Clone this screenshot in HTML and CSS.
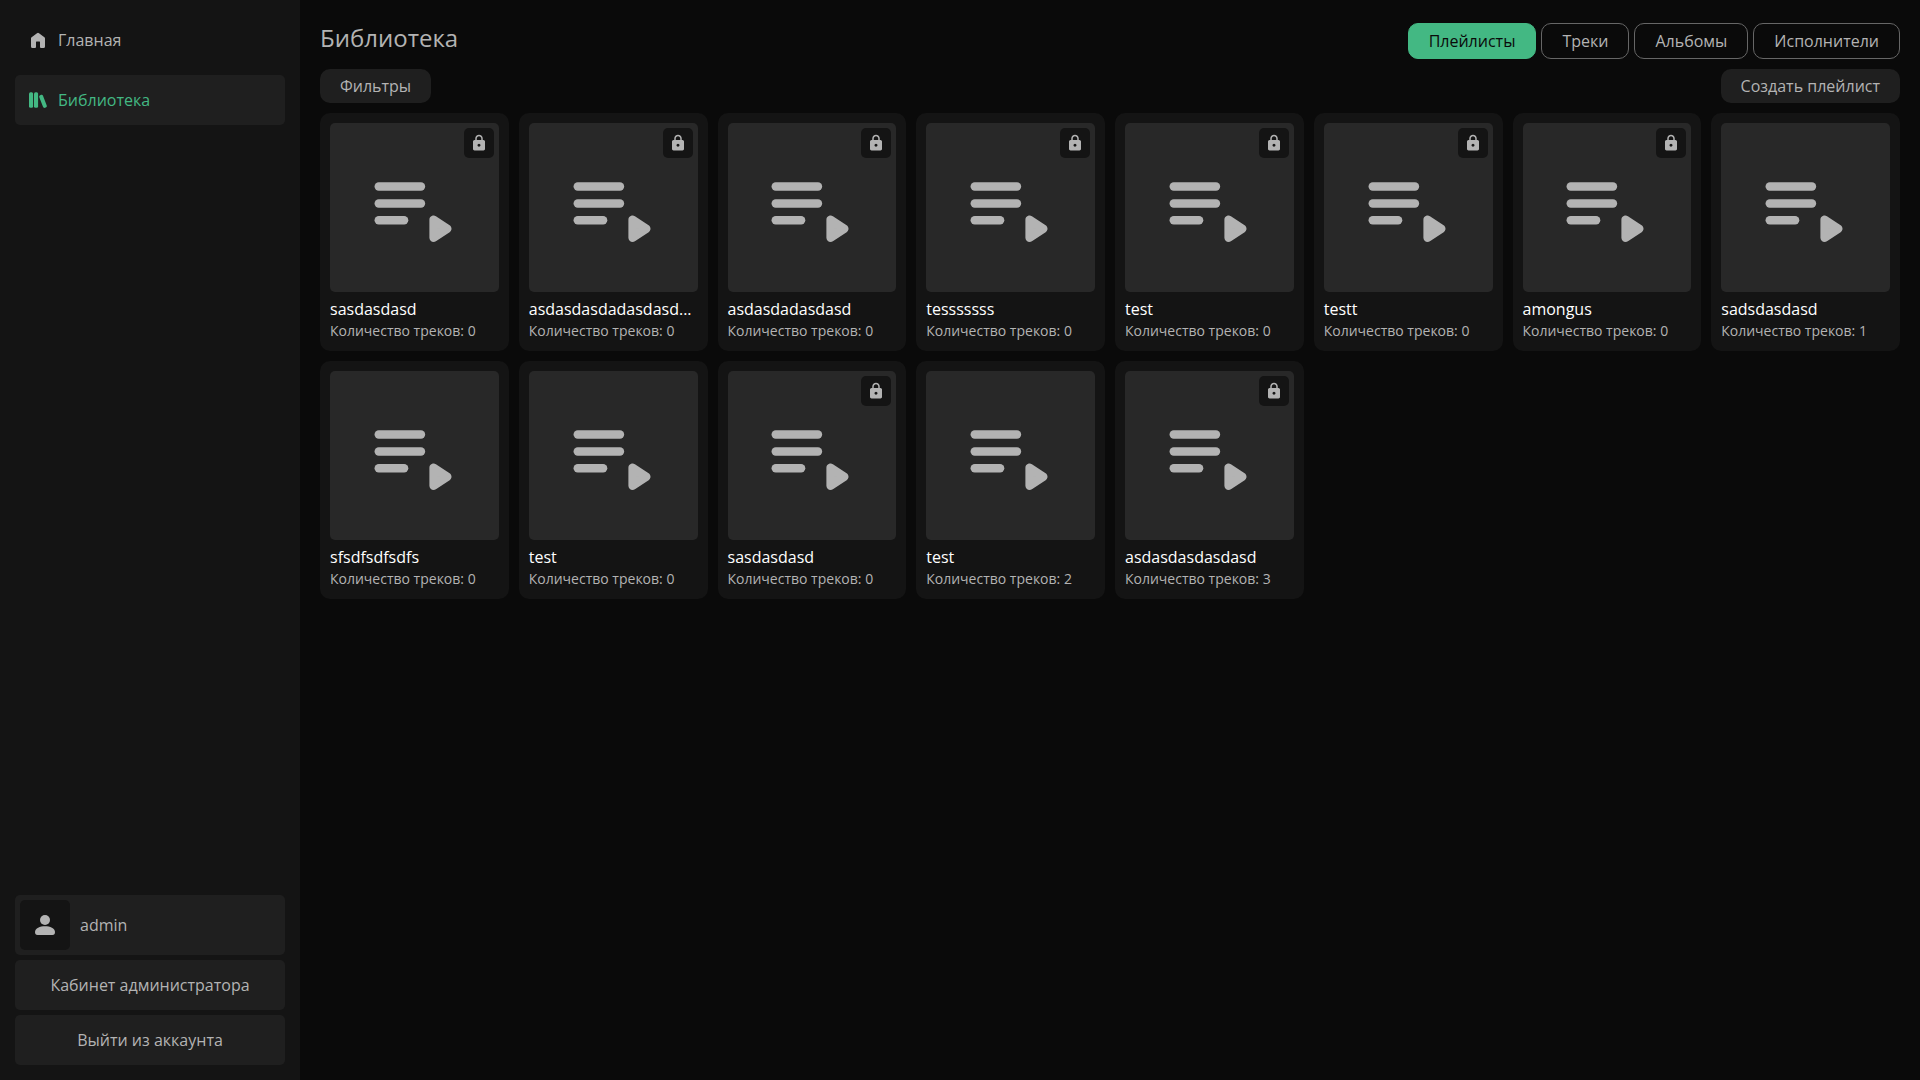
FILE: index.html
```html
<!DOCTYPE html>
<html lang="ru">
<head>
<meta charset="utf-8">
<title>Библиотека</title>
<link rel="stylesheet" href="styles.css">
</head>
<body>
<svg class="sprite" aria-hidden="true">
  <symbol id="i-playlist" viewBox="0 0 24 24"><rect x="2.5" y="6" width="12" height="2" rx="1"/><rect x="2.5" y="10" width="12" height="2" rx="1"/><rect x="2.5" y="14" width="8" height="2" rx="1"/><path d="M16.500 14.850v4.300L19.750 17z" stroke="currentColor" stroke-width="2" stroke-linejoin="round"/></symbol>
  <symbol id="i-lock" viewBox="0 0 24 24"><path d="M6 22q-.825 0-1.412-.587T4 20V10q0-.825.588-1.412T6 8h1V6q0-2.075 1.463-3.537T12 1t3.538 1.463T17 6v2h1q.825 0 1.413.588T20 10v10q0 .825-.587 1.413T18 22zm6-5q.825 0 1.413-.587T14 15t-.587-1.412T12 13t-1.412.588T10 15t.588 1.413T12 17M9 8h6V6q0-1.250-.875-2.125T12 3t-2.125.875T9 6z"/></symbol>
</svg>
<aside class="sidebar">
  <nav class="nav">
    <a class="nav-item"><svg class="nav-icon" viewBox="0 0 20 20"><path d="M9 3.200a1.600 1.600 0 0 1 2 0l5.400 4.100a1.600 1.600 0 0 1 .6 1.300V16.500a1.500 1.500 0 0 1-1.500 1.500H13a1 1 0 0 1-1-1V12a.5.5 0 0 0-.5-.5h-3a.5.5 0 0 0-.5.5v5a1 1 0 0 1-1 1H4.500A1.500 1.500 0 0 1 3 16.500V8.600a1.600 1.600 0 0 1 .6-1.300z"/></svg>Главная</a>
    <a class="nav-item active"><svg class="nav-icon" viewBox="0 0 20 20"><rect x="1" y="2.300" width="4.100" height="15.400" rx="1.500"/><rect x="6" y="2.300" width="4.100" height="15.400" rx="1.500"/><rect x="13" y="4.600" width="4" height="13.400" rx="1.500" transform="rotate(-21 15 11.300)"/></svg>Библиотека</a>
  </nav>
  <div class="account">
    <a class="user"><span class="avatar"><svg viewBox="0 0 20 20"><circle cx="10" cy="5" r="5"/><path d="M10 11.300c5 0 10 2 10 5.700 0 2-.8 3-2.500 3h-15C.8 20 0 19 0 17c0-3.700 5-5.700 10-5.700z"/></svg></span>admin</a>
    <button class="account-btn">Кабинет администратора</button>
    <button class="account-btn">Выйти из аккаунта</button>
  </div>
</aside>
<main class="main">
  <header class="header">
    <h1 class="title">Библиотека</h1>
    <div class="tabs">
      <button class="tab selected">Плейлисты</button>
      <button class="tab">Треки</button>
      <button class="tab">Альбомы</button>
      <button class="tab">Исполнители</button>
    </div>
  </header>
  <div class="toolbar">
    <button class="btn">Фильтры</button>
    <button class="btn">Создать плейлист</button>
  </div>
  <div class="grid" id="grid"></div>
</main>
<script src="app.js"></script>
</body>
</html>
```
FILE: app.js
```js
// name, track count, private
const playlists = [
  ['sasdasdasd', 0, true],
  ['asdasdasdadasdasd...', 0, true],
  ['asdasdadasdasd', 0, true],
  ['tesssssss', 0, true],
  ['test', 0, true],
  ['testt', 0, true],
  ['amongus', 0, true],
  ['sadsdasdasd', 1, false],
  ['sfsdfsdfsdfs', 0, false],
  ['test', 0, false],
  ['sasdasdasd', 0, true],
  ['test', 2, false],
  ['asdasdasdasdasd', 3, true],
];

document.getElementById('grid').innerHTML = playlists.map(([name, count, locked]) => `
  <article class="card">
    <div class="cover">
      <svg class="cover-icon"><use href="#i-playlist"/></svg>
      ${locked ? '<span class="badge"><svg><use href="#i-lock"/></svg></span>' : ''}
    </div>
    <div class="name">${name}</div>
    <div class="count">Количество треков: ${count}</div>
  </article>`).join('');
```
FILE: styles.css
```css
* { box-sizing: border-box; }
body {
  margin: 0;
  height: 100vh;
  display: flex;
  background: #0a0a0a;
  color: #b3b3b3;
  font-family: "Open Sans", "Noto Sans", sans-serif;
  font-size: 16px;
}
svg { fill: currentColor; display: block; }
button { font: inherit; color: inherit; border: 0; margin: 0; }
.sprite { display: none; }
.sidebar {
  width: 300px;
  flex: none;
  padding: 15px;
  background: #141414;
  display: flex;
  flex-direction: column;
  justify-content: space-between;
}
.nav { display: flex; flex-direction: column; gap: 10px; }
.nav-item {
  height: 50px;
  padding: 0 13px;
  border-radius: 5px;
  display: flex;
  align-items: center;
  gap: 10px;
}
.nav-item.active { background: #1f1f1f; color: #43b883; }
.nav-icon { width: 20px; height: 20px; }
.account { display: flex; flex-direction: column; gap: 5px; }
.user {
  height: 60px;
  padding: 5px;
  border-radius: 5px;
  background: #1f1f1f;
  display: flex;
  align-items: center;
  gap: 10px;
}
.avatar {
  width: 50px;
  height: 50px;
  border-radius: 5px;
  background: #141414;
  display: grid;
  place-items: center;
}
.avatar svg { width: 20px; height: 20px; }
.account-btn { height: 50px; border-radius: 5px; background: #1f1f1f; }
.main { flex: 1; min-width: 0; padding: 20px; }
.header { display: flex; justify-content: space-between; align-items: flex-end; height: 39px; }
.title { margin: 0 0 5px; font-size: 24px; font-weight: 400; line-height: 33px; }
.tabs { display: flex; gap: 5px; }
.tab {
  height: 36px;
  padding: 0 20px;
  border: 1px solid #666;
  border-radius: 10px;
  background: transparent;
}
.tab.selected { background: #43b883; border-color: #43b883; color: #0a0a0a; }
.toolbar { display: flex; justify-content: space-between; margin: 10px 0; }
.btn { height: 34px; padding: 0 20px; border-radius: 10px; background: #1f1f1f; }
.grid { display: grid; grid-template-columns: repeat(8, minmax(0, 1fr)); gap: 10px; }
.card { height: 238px; padding: 10px; border-radius: 10px; background: #141414; }
.cover {
  position: relative;
  aspect-ratio: 1;
  border-radius: 5px;
  background: #282828;
  display: grid;
  place-items: center;
}
.cover-icon { width: 60%; height: 60%; }
.badge {
  position: absolute;
  top: 5px;
  right: 5px;
  width: 30px;
  height: 30px;
  border-radius: 5px;
  background: #141414;
  display: grid;
  place-items: center;
}
.badge svg { width: 18px; height: 18px; }
.name {
  margin-top: 6px;
  line-height: 22px;
  color: #fff;
  white-space: nowrap;
}
.count { font-size: 14px; line-height: 21px; }
```
